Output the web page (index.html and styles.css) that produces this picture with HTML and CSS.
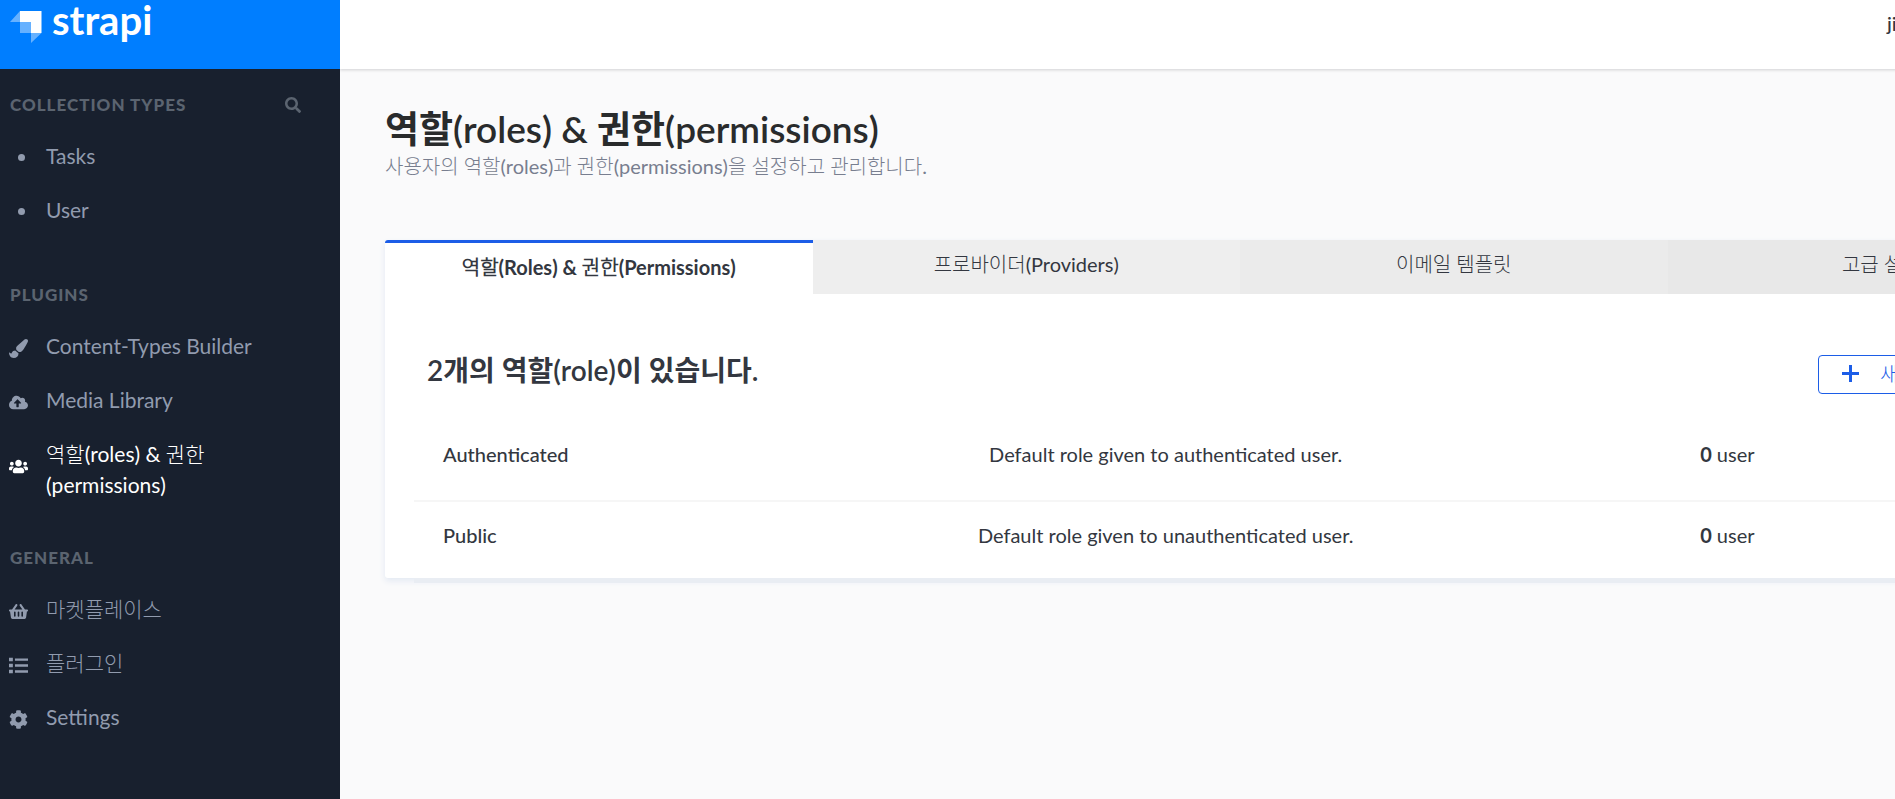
FILE: index.html
```html
<!DOCTYPE html>
<html lang="ko">
<head>
  <meta charset="UTF-8">
  <meta name="viewport" content="width=device-width, initial-scale=1">
  <title>역할(roles) &amp; 권한(permissions)</title>
  <link rel="stylesheet" href="styles.css">
</head>
<body>
  <div class="app">
    <aside class="sidebar">
      <a class="brand" href="#">
        <svg class="brand-mark" viewBox="0 0 32 33" aria-hidden="true">
          <path fill="#fff" d="M10 1h21.500v22H21V12H10z"/>
          <path fill="#fff" fill-opacity=".4" d="M10 1v11H0zM10 12h11v11H10zM21 23h10.500L21 33z"/>
        </svg>
        <span>strapi</span>
      </a>
      <nav class="menu">
        <div class="menu-title">
          <h3>Collection Types</h3>
          <button class="search" type="button" aria-label="Search">
            <svg viewBox="0 0 512 512"><path d="M505 442.7L405.3 343c-4.5-4.5-10.600-7-17-7H372c27.600-35.300 44-79.700 44-128C416 93.100 322.900 0 208 0S0 93.100 0 208s93.100 208 208 208c48.300 0 92.700-16.400 128-44v16.300c0 6.400 2.500 12.500 7 17l99.700 99.700c9.400 9.400 24.600 9.400 33.900 0l28.300-28.300c9.400-9.400 9.400-24.600.1-34zM208 336c-70.700 0-128-57.200-128-128 0-70.700 57.200-128 128-128 70.700 0 128 57.200 128 128 0 70.700-57.200 128-128 128z"/></svg>
          </button>
        </div>
        <ul>
          <li><a href="#"><i class="dot"></i><span>Tasks</span></a></li>
          <li><a href="#"><i class="dot"></i><span>User</span></a></li>
        </ul>
        <div class="menu-title"><h3>Plugins</h3></div>
        <ul>
          <li><a href="#">
            <svg viewBox="0 0 512 512"><path d="M167.020 309.340c-40.120 2.580-76.530 17.860-97.190 72.300-2.350 6.210-8 9.980-14.590 9.980-11.110 0-45.460-27.670-55.250-34.350C0 439.620 37.930 512 128 512c75.860 0 128-43.770 128-120.190 0-3.110-.65-6.080-.97-9.130l-88.010-73.340zM457.890 0c-15.160 0-29.370 6.710-40.210 16.450C213.270 199.050 192 203.340 192 257.090c0 13.700 3.250 26.760 8.730 38.700l63.820 53.180c7.210 1.800 14.640 3.030 22.390 3.030 62.110 0 98.110-45.470 211.160-256.460 7.380-14.350 13.900-29.850 13.900-45.990C512 20.640 486 0 457.890 0z"/></svg>
            <span>Content-Types Builder</span></a></li>
          <li><a href="#">
            <svg viewBox="0 0 640 512"><path d="M537.600 226.600c4.100-10.700 6.400-22.400 6.400-34.600 0-53-43-96-96-96-19.700 0-38.100 6-53.300 16.200C367 64.200 315.300 32 256 32c-88.400 0-160 71.600-160 160 0 2.700.1 5.400.2 8.100C40.200 219.800 0 273.200 0 336c0 79.500 64.500 144 144 144h368c70.700 0 128-57.300 128-128 0-61.900-44-113.600-102.400-125.400zM393.400 288H328v112c0 8.800-7.200 16-16 16h-48c-8.800 0-16-7.200-16-16V288h-65.400c-14.300 0-21.400-17.200-11.300-27.300l105.400-105.400c6.200-6.200 16.400-6.200 22.600 0l105.400 105.400c10.100 10.100 2.900 27.300-11.300 27.300z"/></svg>
            <span>Media Library</span></a></li>
          <li><a class="active" href="#">
            <svg viewBox="0 0 640 512"><path d="M96 224c35.300 0 64-28.700 64-64s-28.700-64-64-64-64 28.700-64 64 28.700 64 64 64zm448 0c35.300 0 64-28.700 64-64s-28.700-64-64-64-64 28.700-64 64 28.700 64 64 64zm32 32h-64c-17.600 0-33.500 7.100-45.100 18.600 40.300 22.100 68.900 62 75.100 109.400h66c17.700 0 32-14.300 32-32v-32c0-35.300-28.700-64-64-64zm-256 0c61.900 0 112-50.100 112-112S381.900 32 320 32 208 82.100 208 144s50.100 112 112 112zm76.800 32h-8.300c-20.800 10-43.900 16-68.500 16s-47.600-6-68.500-16h-8.300C179.600 288 128 339.600 128 403.200V432c0 26.500 21.500 48 48 48h288c26.500 0 48-21.500 48-48v-28.800c0-63.600-51.600-115.200-115.200-115.200zm-223.700-13.400C161.500 263.100 145.600 256 128 256H64c-35.300 0-64 28.700-64 64v32c0 17.700 14.300 32 32 32h65.900c6.300-47.400 34.900-87.300 75.200-109.400z"/></svg>
            <span>역할(roles) &amp; 권한(permissions)</span></a></li>
        </ul>
        <div class="menu-title"><h3>General</h3></div>
        <ul>
          <li><a href="#">
            <svg viewBox="0 0 576 512"><path d="M576 216v16c0 13.255-10.745 24-24 24h-8l-26.113 182.788C514.509 462.435 494.257 480 470.370 480H105.630c-23.887 0-44.139-17.565-47.518-41.212L32 256h-8c-13.255 0-24-10.745-24-24v-16c0-13.255 10.745-24 24-24h67.341l106.780-146.821c10.395-14.292 30.407-17.453 44.701-7.058 14.293 10.395 17.453 30.408 7.058 44.701L170.477 192h235.046L326.120 82.821c-10.395-14.292-7.234-34.306 7.059-44.701 14.291-10.395 34.306-7.235 44.701 7.058L484.659 192H552c13.255 0 24 10.745 24 24zM312 392V280c0-13.255-10.745-24-24-24s-24 10.745-24 24v112c0 13.255 10.745 24 24 24s24-10.745 24-24zm112 0V280c0-13.255-10.745-24-24-24s-24 10.745-24 24v112c0 13.255 10.745 24 24 24s24-10.745 24-24zm-224 0V280c0-13.255-10.745-24-24-24s-24 10.745-24 24v112c0 13.255 10.745 24 24 24s24-10.745 24-24z"/></svg>
            <span>마켓플레이스</span></a></li>
          <li><a href="#">
            <svg viewBox="0 0 512 512"><path d="M0 48h104v96H0zM0 208h104v96H0zM0 368h104v96H0zM160 64h352v64H160zM160 224h352v64H160zM160 384h352v64H160z"/></svg>
            <span>플러그인</span></a></li>
          <li><a href="#">
            <svg viewBox="0 0 512 512"><path d="M487.400 315.700l-42.600-24.600c4.300-23.200 4.300-47 0-70.200l42.600-24.600c4.900-2.800 7.100-8.600 5.500-14-11.100-35.600-30-67.800-54.700-94.600-3.800-4.100-10-5.100-14.800-2.300L380.800 110c-17.900-15.400-38.500-27.300-60.800-35.100V25.800c0-5.600-3.900-10.500-9.400-11.700-36.700-8.200-74.300-7.800-109.200 0-5.500 1.200-9.400 6.100-9.400 11.700V75c-22.200 7.900-42.800 19.800-60.800 35.100L88.700 85.500c-4.900-2.800-11-1.900-14.800 2.300-24.700 26.700-43.600 58.900-54.700 94.600-1.700 5.400.6 11.200 5.500 14L67.300 221c-4.300 23.200-4.300 47 0 70.200l-42.600 24.600c-4.900 2.800-7.100 8.600-5.500 14 11.100 35.600 30 67.800 54.700 94.600 3.800 4.100 10 5.100 14.800 2.300l42.600-24.600c17.900 15.400 38.500 27.300 60.800 35.100v49.200c0 5.600 3.900 10.500 9.400 11.700 36.700 8.200 74.300 7.800 109.200 0 5.500-1.200 9.400-6.100 9.400-11.700v-49.200c22.200-7.900 42.800-19.800 60.800-35.100l42.600 24.600c4.900 2.800 11 1.900 14.800-2.300 24.700-26.700 43.600-58.900 54.700-94.600 1.500-5.500-.7-11.300-5.600-14.100zM256 336c-44.100 0-80-35.900-80-80s35.900-80 80-80 80 35.900 80 80-35.900 80-80 80z"/></svg>
            <span>Settings</span></a></li>
        </ul>
      </nav>
    </aside>

    <div class="viewport">
      <div class="canvas">
        <header class="topbar">
          <a class="account" href="#">ji</a>
        </header>
        <main class="content">
          <h1>역할(roles) &amp; 권한(permissions)</h1>
          <p class="subtitle">사용자의 역할(roles)과 권한(permissions)을 설정하고 관리합니다.</p>

          <section class="card">
            <nav class="tabs">
              <a class="tab active" href="#">역할(Roles) &amp; 권한(Permissions)</a>
              <a class="tab" href="#">프로바이더(Providers)</a>
              <a class="tab" href="#">이메일 템플릿</a>
              <a class="tab" href="#">고급 설정</a>
            </nav>
            <div class="card-head">
              <h2>2개의 역할(role)이 있습니다.</h2>
              <button class="add" type="button">
                <svg viewBox="0 0 17 17"><path d="M7 0h3v7h7v3h-7v7H7v-7H0V7h7z"/></svg>
                <span>새 역할 추가</span>
              </button>
            </div>
            <div class="list">
              <table>
                <colgroup>
                  <col class="col-name">
                  <col class="col-desc">
                  <col class="col-users">
                  <col>
                </colgroup>
                <tbody>
                  <tr>
                    <td class="name">Authenticated</td>
                    <td>Default role given to authenticated user.</td>
                    <td><b>0</b> user</td>
                    <td></td>
                  </tr>
                  <tr>
                    <td class="name">Public</td>
                    <td>Default role given to unauthenticated user.</td>
                    <td><b>0</b> user</td>
                    <td></td>
                  </tr>
                </tbody>
              </table>
            </div>
          </section>
        </main>
      </div>
    </div>
  </div>
</body>
</html>
```

FILE: styles.css
```css
* {
  margin: 0;
  padding: 0;
  box-sizing: border-box;
}
body {
  background: #fafafb;
  color: #333740;
  font-family: Lato, "Noto Sans CJK KR Light", "Noto Sans CJK KR", sans-serif;
  font-size: 20px;
  line-height: 30px;
}
a {
  color: inherit;
  text-decoration: none;
}
ul {
  list-style: none;
}
svg {
  fill: currentColor;
}
button {
  background: none;
  border: none;
  color: inherit;
  font: inherit;
  cursor: pointer;
}
.app {
  display: flex;
  min-height: 100vh;
}

/* Sidebar */
.sidebar {
  flex: 0 0 340px;
  background: #18202e;
  color: #919bae;
}
.brand {
  display: flex;
  gap: 10px;
  height: 69px;
  padding-left: 10px;
  background: #007eff;
  color: #fff;
  font-size: 40px;
  font-weight: 700;
  line-height: 40px;
}
.brand-mark {
  width: 32px;
  height: 33px;
  margin-top: 10px;
}
.menu {
  padding: 26px 39px 24px 10px;
}
.menu-title {
  display: flex;
  justify-content: space-between;
  align-items: center;
  height: 20px;
  margin-bottom: 14px;
  color: #5b6470;
}
.menu ul + .menu-title {
  margin-top: 48px;
}
.menu-title h3 {
  font-size: 17px;
  font-weight: 900;
  letter-spacing: 1px;
  text-transform: uppercase;
}
.search {
  display: flex;
}
.search svg {
  width: 16px;
  height: 16px;
}
.menu li a {
  display: flex;
  align-items: center;
  gap: 18px;
  min-height: 54px;
}
.menu li span {
  flex: 0 1 190px;
  align-self: flex-start;
  padding-top: 11px;
  font-size: 21px;
  line-height: 31px;
}
.menu li a:not(.active) span {
  white-space: nowrap;
}
.menu li svg {
  flex: none;
  width: 19px;
  height: 19px;
  margin: 5px 0 0 -1px;
}
.menu .active {
  color: #fff;
}
.dot {
  width: 7px;
  height: 7px;
  margin: 2px 3px 0 8px;
  border-radius: 50%;
  background: currentColor;
}

/* Page area, wider than the window and cut at its right edge */
.viewport {
  flex: 1;
  min-width: 0;
  overflow: hidden;
}
.canvas {
  width: calc(100% + 245px);
}
.topbar {
  display: flex;
  justify-content: flex-end;
  height: 69px;
  padding-top: 8px;
  background: #fff;
  box-shadow: 0 1px 3px rgba(40, 42, 49, 0.2);
}
.account {
  width: 253px;
  font-weight: 500;
}
.content {
  padding: 38px 45px;
}
h1,
h2 {
  font-family: Lato, "Noto Sans CJK KR", sans-serif;
  font-weight: 600;
}
h1 {
  color: #292b2c;
  font-size: 37px;
  line-height: 44px;
}
.subtitle {
  margin-bottom: 58px;
  color: #787e8f;
  line-height: 31px;
}
.card {
  border-radius: 3px;
  background: #fff;
  box-shadow: 0 3px 6px #e3e9f3;
}
.tabs {
  display: flex;
}
.tab {
  flex: 1;
  height: 54px;
  padding-top: 9px;
  background: #eee;
  text-align: center;
}
.tab:nth-child(3) {
  background: #ebebeb;
}
.tab:nth-child(4) {
  background: #e8e8e8;
}
.tab.active {
  border-top: 3px solid #1c5de7;
  border-radius: 3px 0 0 0;
  background: #fff;
  font-weight: 700;
}
.card-head {
  display: flex;
  justify-content: space-between;
  align-items: flex-start;
  padding: 61px 43px 24px 42px;
}
h2 {
  font-size: 28px;
}
.add {
  display: flex;
  align-items: center;
  gap: 21px;
  width: 234px;
  height: 39px;
  padding: 0 23px 2px;
  border: 1px solid #1c5de7;
  border-radius: 4px;
  color: #1c5de7;
}
.add svg {
  width: 17px;
  height: 17px;
}
.list {
  margin: 0 29px;
  box-shadow: 0 5px 0 #e9edf3;
}
table {
  width: 100%;
  border-collapse: collapse;
  table-layout: fixed;
}
.col-name {
  width: 18%;
}
.col-desc {
  width: 55%;
}
.col-users {
  width: 13%;
}
td {
  height: 83px;
  padding-bottom: 11px;
  text-align: center;
  white-space: nowrap;
}
tr + tr td {
  height: 77px;
  border-top: 2px solid #f6f6f6;
}
.name {
  padding-left: 29px;
  font-weight: 500;
  text-align: left;
}
```
